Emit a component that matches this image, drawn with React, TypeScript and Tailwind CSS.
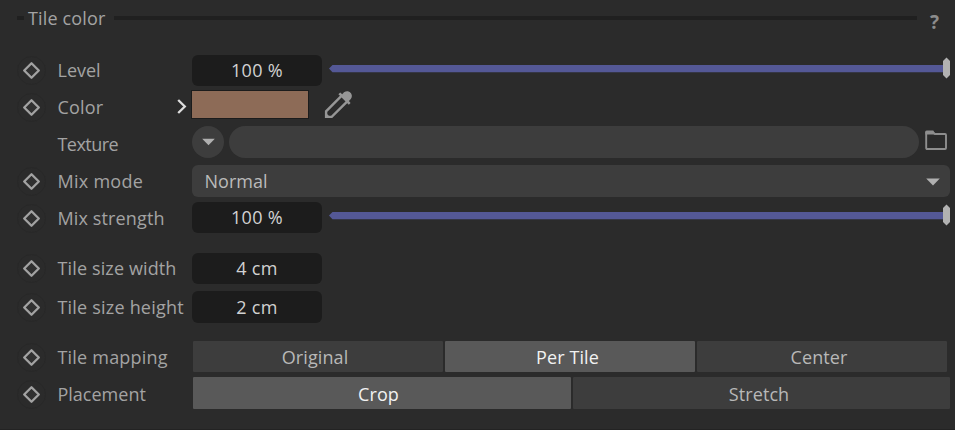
import type { ReactNode } from "react";

function KeyDot() {
  return (
    <svg className="block h-[29px] w-[29px] shrink-0" viewBox="0 0 29 29" fill="none">
      <circle cx="14.5" cy="14.5" r="14" stroke="#282828" />
      <path d="M14.5 7.2L21.8 14.5L14.5 21.8L7.2 14.5Z" fill="#303030" stroke="#a2a2a2" strokeWidth="2.3" strokeLinejoin="round" />
    </svg>
  );
}

interface RowProps {
  label: string;
  spacing: string;
  height: string;
  keyed?: boolean;
  extra?: ReactNode;
  children: ReactNode;
}

function Row({ label, spacing, height, keyed = true, extra, children }: RowProps) {
  return (
    <div className={`flex items-start ${height}`}>
      <div className="w-[40.5px] shrink-0">{keyed && <KeyDot />}</div>
      <div className={`h-[29px] shrink-0 whitespace-nowrap leading-[29px] ${extra ? "w-[118px]" : "w-[134.5px]"} ${spacing}`}>{label}</div>
      {extra}
      {children}
    </div>
  );
}

function NumberField({ value, className }: { value: string; className: string }) {
  return (
    <div className={`flex w-[130px] shrink-0 items-center justify-center rounded-md bg-[#1c1c1c] tracking-[0.3px] text-[#d2d2d2] ${className}`}>
      {value}
    </div>
  );
}

function Slider({ className }: { className: string }) {
  return (
    <svg className={`ml-[7px] block h-7 w-[621px] shrink-0 ${className}`} viewBox="0 0 621 28">
      <path d="M3.5 10H614V17.3H3.5L0 13.6Z" fill="#545896" />
      <path d="M617.5 2.5L621 6V20L617.5 23.5L614 20V6Z" fill="#b2b2b2" />
    </svg>
  );
}

function Triangle({ className }: { className: string }) {
  return (
    <svg className={className} viewBox="0 0 14 8">
      <path d="M0.2 0.5H13.8L7 7.5Z" fill="#b0b0b0" />
    </svg>
  );
}

function Segment({ label, active = false, className }: { label: string; active?: boolean; className: string }) {
  return (
    <div className={`flex items-center justify-center rounded-[1px] pt-0.5 ${active ? "bg-[#595959] text-[#f2f2f2]" : "bg-[#3d3d3d] text-[#b8b8b8]"} ${className}`}>
      {label}
    </div>
  );
}

export default function App() {
  return (
    <div className="h-[430px] w-[955px] overflow-hidden border-b border-[#232323] bg-[#2b2b2b] pl-[17px] font-['Open_Sans','Noto_Sans',sans-serif] text-[18px] text-[#a3a3a3]">
      <div className="flex h-[56px] items-start">
        <div className="mt-4 h-1 w-[7px] bg-[#202020]" />
        <div className="ml-1 mt-[5px] w-[86px] whitespace-nowrap leading-[27px] tracking-[0.15px]">Tile color</div>
        <div className="mt-4 h-1 w-[803px] bg-[#202020]" />
        <div className="ml-[13px] mt-[9px] text-[19px] font-bold leading-[26px] text-[#8c8c8c]">?</div>
      </div>

      <Row label="Level" spacing="tracking-[0px]" height="h-[37px]">
        <NumberField value="100 %" className="-mt-px h-[31px]" />
        <Slider className="-mt-px" />
      </Row>
      <Row
        label="Color"
        spacing="tracking-[0.15px]"
        height="h-[37px]"
        extra={
          <svg className="mt-[5px] h-[18px] w-[15.5px] shrink-0" viewBox="0 0 15.5 18" fill="none">
            <path d="M2.2 2L8.8 8.5L2.2 15" stroke="#dedede" strokeWidth="2.3" />
          </svg>
        }
      >
        <div className="-mt-[3px] h-[29px] w-[118px] shrink-0 border border-[#1c1c1c] bg-[#8d6b57]" />
        <svg className="-mt-[3px] ml-[14px] h-[30px] w-[30px] shrink-0" viewBox="0 0 30 30" fill="none">
          <path d="M18.2 6.2L3.1 21.3V26.9H8.7L23.8 11.8" stroke="#969696" strokeWidth="2.4" />
          <path d="M2 22L8 28H2Z" fill="#969696" />
          <path d="M15.4 4.2L17.2 2.4L19.2 4.2L21 2.3C25.8-1.2 31.2 4.4 27.8 9L25.9 10.9L27.6 12.9L25.8 14.7Z" fill="#969696" />
        </svg>
      </Row>
      <Row label="Texture" spacing="tracking-[-0.55px]" height="h-[37px]" keyed={false}>
        <div className="-mt-1 flex h-8 w-8 shrink-0 items-center justify-center rounded-full bg-[#3d3d3d]">
          <Triangle className="h-2 w-[13px]" />
        </div>
        <div className="-mt-1 ml-[5px] h-8 w-[690px] shrink-0 rounded-full bg-[#3d3d3d]" />
        <svg className="ml-[6px] h-5 w-[22px] shrink-0" viewBox="0 0 22 20" fill="none">
          <path d="M1.2 2.5H8L10 4H20Q21 4 21 5V18Q21 19 20 19H2.2Q1.2 19 1.2 18Z" stroke="#8e8e8e" strokeWidth="1.9" />
          <path d="M0.3 2Q0.5 0.6 2 0.6H8.3L10.5 4.5H0.5Z" fill="#8e8e8e" />
        </svg>
      </Row>
      <Row label="Mix mode" spacing="tracking-[0.27px]" height="h-[37px]">
        <div className="-mt-0.5 flex h-8 w-[758px] shrink-0 items-center justify-between rounded-md bg-[#3d3d3d] pl-[12.5px] pr-[10.5px] tracking-[0px] text-[#bababa]">
          Normal
          <Triangle className="mt-0.5 h-2 w-[14px]" />
        </div>
      </Row>
      <Row label="Mix strength" spacing="tracking-[0.13px]" height="h-[50px]">
        <NumberField value="100 %" className="-mt-0.5 h-[31px]" />
        <Slider className="-mt-0.5" />
      </Row>
      <Row label="Tile size width" spacing="tracking-[0.13px]" height="h-[39px]">
        <NumberField value="4 cm" className="-mt-px h-[31px]" />
      </Row>
      <Row label="Tile size height" spacing="tracking-[0.2px]" height="h-[50px]">
        <NumberField value="2 cm" className="-mt-0.5 h-8" />
      </Row>
      <Row label="Tile mapping" spacing="tracking-[0.2px]" height="h-[37px]">
        <div className="-mt-0.5 ml-px flex h-[31px] shrink-0 gap-0.5 tracking-[0.1px]">
          <Segment label="Original" className="w-[250px] pr-1.5" />
          <Segment label="Per Tile" active className="w-[250px] pr-[5px]" />
          <Segment label="Center" className="w-[250px] pr-1.5" />
        </div>
      </Row>
      <Row label="Placement" spacing="tracking-[0px]" height="h-[37px]">
        <div className="-mt-[3px] ml-px flex h-8 shrink-0 gap-0.5 tracking-[0.1px]">
          <Segment label="Crop" active className="w-[378px] pr-[7px]" />
          <Segment label="Stretch" className="w-[377px] pr-[5px]" />
        </div>
      </Row>
    </div>
  );
}
